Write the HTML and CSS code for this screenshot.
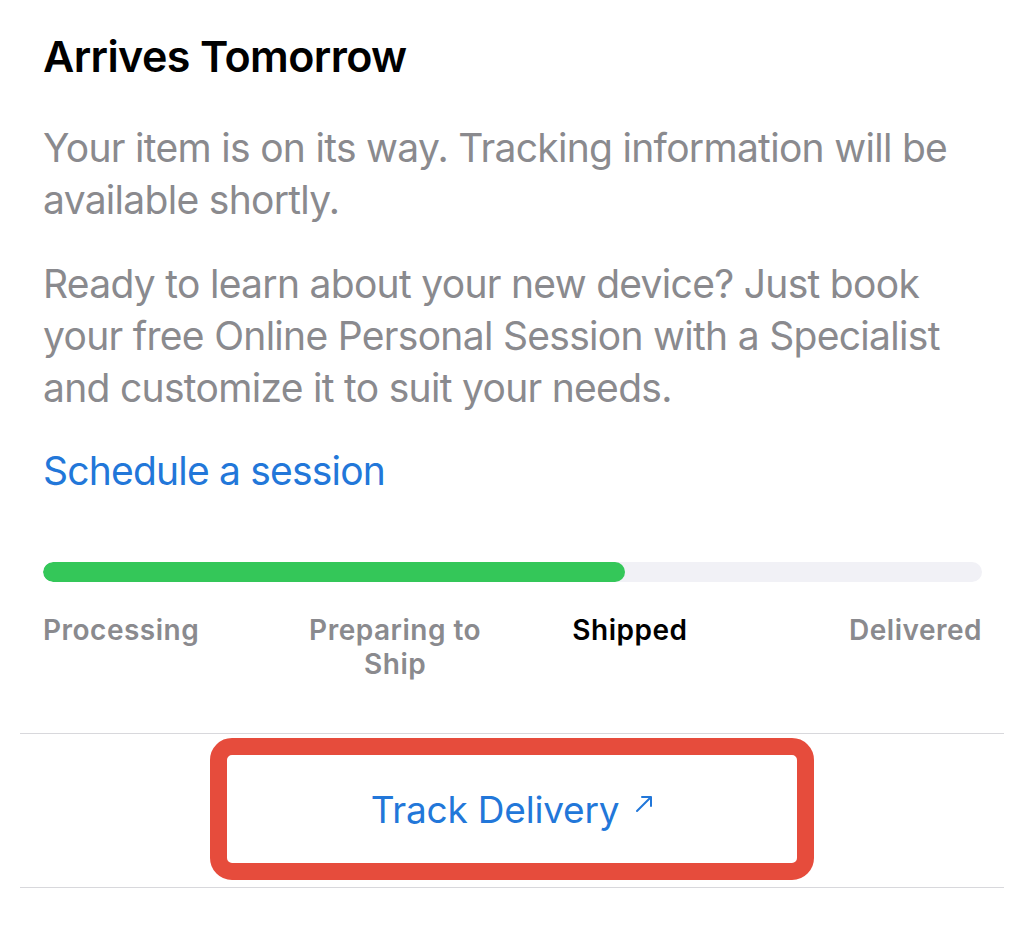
FILE: index.html
```html
<!DOCTYPE html>
<html lang="en">
<head>
<meta charset="utf-8">
<title>Arrives Tomorrow</title>
<link rel="stylesheet" href="styles.css">
</head>
<body>
<main class="card">
  <div class="content">
    <h1 class="title">Arrives Tomorrow</h1>
    <p class="text first">Your item is on its way. Tracking information will be available shortly.</p>
    <p class="text second">Ready to learn about your new device? Just book your free Online Personal Session with a Specialist and customize it to suit your needs.</p>
    <a class="link" href="#">Schedule a session</a>
    <div class="progress"><div class="fill" style="width:62%"></div></div>
    <div class="steps">
      <span class="step s1">Processing</span>
      <span class="step s2">Preparing to<br>Ship</span>
      <span class="step s3 active">Shipped</span>
      <span class="step s4">Delivered</span>
    </div>
  </div>
  <div class="actions">
    <a class="track" href="#">Track Delivery<svg class="arrow" viewBox="0 0 18 18" width="18" height="18" aria-hidden="true"><path d="M2 16 L16 2 M7 2 H16 V11" fill="none" stroke="currentColor" stroke-width="2" stroke-linecap="round" stroke-linejoin="round"/></svg></a>
  </div>
</main>
</body>
</html>
```
FILE: styles.css
```css
* { box-sizing: border-box; }
html, body { margin: 0; padding: 0; background: #fff; }
body { font-family: Inter, "Noto Sans", "Liberation Sans", sans-serif; color: #000; }

.card { width: 1024px; padding: 0 20px; }

.content { padding: 29px 22px 0 23px; }

.title {
  margin: 0;
  font-size: 43px;
  line-height: 54px;
  font-weight: 600;
  letter-spacing: -0.6px;
  color: #000;
}

.text {
  margin: 0;
  font-size: 39px;
  line-height: 52px;
  font-weight: 400;
  color: #8a8a8e;
  letter-spacing: -0.7px;
}
.text.first { margin-top: 39px; }
.text.second { margin-top: 32px; }

.link {
  display: block;
  margin-top: 31px;
  font-size: 39px;
  line-height: 52px;
  color: #2277d9;
  text-decoration: none;
  letter-spacing: -0.8px;
}

.progress {
  margin-top: 65px;
  height: 20px;
  border-radius: 10px;
  background: #f1f1f6;
  overflow: hidden;
}
.progress .fill { height: 100%; background: #34c759; border-radius: 10px; }

.steps {
  margin-top: 31px;
  display: grid;
  grid-template-columns: repeat(4, 1fr);
  font-size: 28px;
  line-height: 34px;
  font-weight: 600;
  letter-spacing: 0.5px;
  color: #8a8a8e;
}
.step { text-align: center; }
.step.s1 { text-align: left; }
.step.s4 { text-align: right; }
.step.active { color: #000; }

.actions {
  margin-top: 52px;
  border-top: 1px solid #d8d8dc;
  border-bottom: 1px solid #d8d8dc;
  padding: 4px 0 7px;
  display: flex;
  justify-content: center;
}

.track {
  width: 604px;
  height: 142px;
  border: 17px solid #e64c3c;
  border-radius: 22px;
  display: flex;
  align-items: center;
  justify-content: center;
  gap: 16px;
  color: #2277d9;
  text-decoration: none;
  font-size: 37px;
  letter-spacing: -0.2px;
}
.arrow { margin-top: -10px; }
```
